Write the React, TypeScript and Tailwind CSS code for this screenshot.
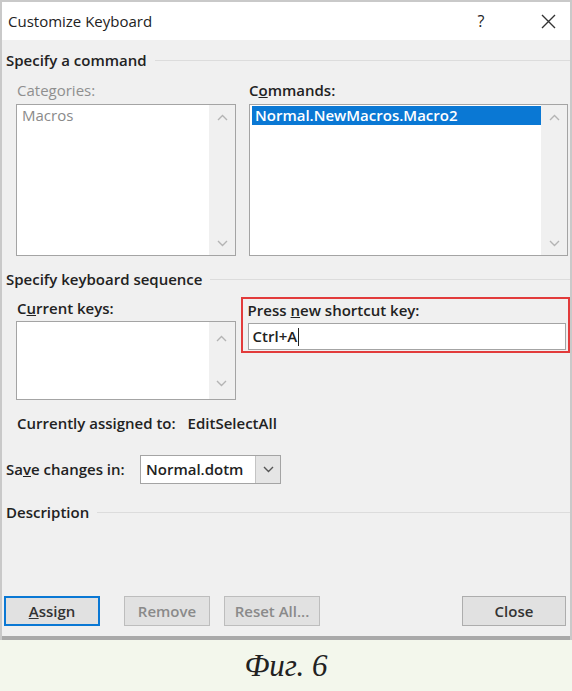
import React from 'react'

const Up = () => (
    <svg width="11" height="7" viewBox="0 0 11 7" fill="none">
        <path d="M1 6L5.5 1.5L10 6" stroke="#b4b4b4" strokeWidth="1.4" />
    </svg>
)

const Down = ({ color = '#b4b4b4' }: { color?: string }) => (
    <svg width="11" height="7" viewBox="0 0 11 7" fill="none">
        <path d="M1 1L5.5 5.5L10 1" stroke={color} strokeWidth="1.4" />
    </svg>
)

const Heading = ({ children }: { children: React.ReactNode }) => (
    <div className="flex items-center h-[20px] pl-[4px]">
        <span className="font-semibold text-[15px] text-[#222] whitespace-nowrap">{children}</span>
        <div className="flex-1 ml-[8px] h-px bg-[#dcdcdc]" />
    </div>
)

const ScrollTrack = ({ upTop, downBottom }: { upTop: string; downBottom: string }) => (
    <div className="w-[26px] bg-[#f0f0f0] flex flex-col items-center justify-between">
        <div className={upTop}>
            <Up />
        </div>
        <div className={downBottom}>
            <Down />
        </div>
    </div>
)

const Btn = ({
    children,
    w,
    tone = 'normal',
}: {
    children: React.ReactNode
    w: string
    tone?: 'normal' | 'off' | 'focus'
}) => (
    <div
        className={
            w +
            ' h-[30px] flex items-center justify-center bg-[#e1e1e1] text-[15px] font-semibold ' +
            (tone === 'focus'
                ? 'border-2 border-[#0a78d4] text-[#333]'
                : tone === 'off'
                ? 'border border-[#bdbdbd] text-[#8a8a8a]'
                : 'border border-[#adadad] text-[#333]')
        }
    >
        {children}
    </div>
)

export default function App() {
    return (
        <div
            className="w-[572px] h-[691px] bg-[#f3f7ec] flex flex-col"
            style={{ fontFamily: '"Open Sans", "Noto Sans", sans-serif' }}
        >
            <div className="h-[640px] flex flex-col border-x-2 border-t-2 border-[#c9c9c9]">
                {/* title bar */}
                <div className="h-[38px] bg-white flex items-center pl-[6px] pr-[14px] text-[#222]">
                    <span className="text-[15px] flex-1">Customize Keyboard</span>
                    <span className="text-[16px] w-[20px] text-center mr-[50px]">?</span>
                    <svg width="15" height="15" viewBox="0 0 15 15">
                        <path d="M1 1L14 14M14 1L1 14" stroke="#333" strokeWidth="1.4" />
                    </svg>
                </div>

                {/* body */}
                <div className="flex-1 bg-[#f0f0f0] border-b-4 border-[#a9a9a9] flex flex-col">
                    <div className="mt-[10px]">
                        <Heading>Specify a command</Heading>
                    </div>

                    <div className="flex mt-[10px] h-[20px] items-center text-[15px]">
                        <span className="ml-[15px] w-[218px] text-[#8f8f8f]">Categories:</span>
                        <span className="ml-[14px] font-semibold text-[#222]">
                            C<span className="underline">o</span>mmands:
                        </span>
                    </div>

                    <div className="flex mt-[4px] h-[152px]">
                        <div className="ml-[14px] w-[220px] border border-[#a4a4a4] bg-white flex">
                            <div className="flex-1 pl-[5px] text-[15px] text-[#8a8a8a] leading-[20px]">Macros</div>
                            <ScrollTrack upTop="mt-[9px]" downBottom="mb-[8px]" />
                        </div>
                        <div className="ml-[13px] w-[319px] border border-[#a4a4a4] bg-white flex">
                            <div className="flex-1 pl-[2px] pt-[1px]">
                                <div className="h-[19px] bg-[#0a78d4] text-white text-[15px] font-semibold pl-[3px] flex items-center">
                                    Normal.NewMacros.Macro2
                                </div>
                            </div>
                            <ScrollTrack upTop="mt-[9px]" downBottom="mb-[8px]" />
                        </div>
                    </div>

                    <div className="mt-[13px]">
                        <Heading>Specify keyboard sequence</Heading>
                    </div>

                    <div className="flex mt-[8px] items-start">
                        <div className="ml-[14px] w-[220px] flex flex-col">
                            <div className="mt-[1px] h-[20px] pl-[1px] flex items-center text-[15px] font-semibold text-[#222]">
                                C<span className="underline">u</span>rrent keys:
                            </div>
                            <div className="mt-[3px] h-[79px] border border-[#a4a4a4] bg-white flex">
                                <div className="flex-1" />
                                <ScrollTrack upTop="mt-[13px]" downBottom="mb-[12px]" />
                            </div>
                        </div>
                        <div className="ml-[5px] w-[330px] h-[56px] border-2 border-[#e23b3b] pl-[5px] pr-[2px] flex flex-col">
                            <div className="mt-[1px] h-[20px] flex items-center text-[15px] font-semibold text-[#222]">
                                Press <span className="underline ml-[4px]">n</span>ew shortcut key:
                            </div>
                            <div className="mt-[3px] h-[27px] border border-[#a4a4a4] bg-white flex items-center pl-[4px] text-[15px] font-semibold text-[#222]">
                                Ctrl+A
                                <span className="w-px h-[18px] bg-[#222] ml-px" />
                            </div>
                        </div>
                    </div>

                    <div className="mt-[13px] h-[20px] flex items-center ml-[15px] text-[15px] font-semibold text-[#222]">
                        <span>Currently assigned to:</span>
                        <span className="ml-[12px]">EditSelectAll</span>
                    </div>

                    <div className="mt-[22px] h-[29px] flex items-center ml-[4px]">
                        <span className="w-[134px] text-[15px] font-semibold text-[#222]">
                            Sa<span className="underline">v</span>e changes in:
                        </span>
                        <div className="w-[141px] h-[29px] border border-[#a4a4a4] bg-white flex">
                            <div className="flex-1 flex items-center pl-[5px] text-[15px] font-semibold text-[#222]">
                                Normal.dotm
                            </div>
                            <div className="w-[25px] bg-[#e5e5e5] border-l border-[#c4c4c4] flex items-center justify-center">
                                <Down color="#555" />
                            </div>
                        </div>
                    </div>

                    <div className="mt-[18px]">
                        <Heading>Description</Heading>
                    </div>

                    <div className="mt-[74px] flex items-center ml-[2px] mr-[4px]">
                        <Btn w="w-[96px]" tone="focus">
                            <span>
                                <span className="underline">A</span>ssign
                            </span>
                        </Btn>
                        <div className="ml-[24px]">
                            <Btn w="w-[86px]" tone="off">
                                Remove
                            </Btn>
                        </div>
                        <div className="ml-[14px]">
                            <Btn w="w-[96px]" tone="off">
                                Reset All...
                            </Btn>
                        </div>
                        <div className="flex-1" />
                        <Btn w="w-[104px]">Close</Btn>
                    </div>
                </div>
            </div>

            {/* caption */}
            <div className="flex-1 flex items-center justify-center">
                <span
                    className="italic text-[31px] text-[#222] leading-none"
                    style={{ fontFamily: '"Liberation Serif", serif' }}
                >
                    Фиг. 6
                </span>
            </div>
        </div>
    )
}
